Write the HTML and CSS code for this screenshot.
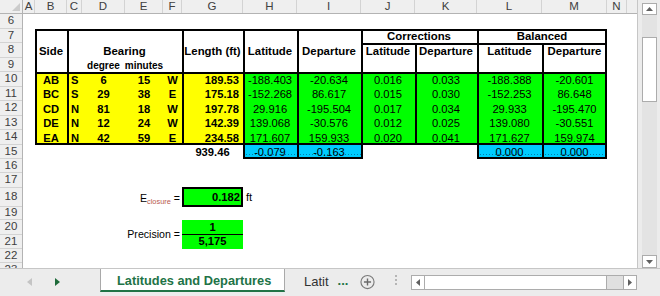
FILE: index.html
```html
<!DOCTYPE html>
<html>
<head>
<meta charset="utf-8">
<link rel="stylesheet" href="styles.css">
</head>
<body>
<div class="app">
  <div class="main">
    <div class="sheet">
      <div class="corner"><span class="corner-tri"></span></div>
      <div class="colheads">
        <div class="ch wA">A</div><div class="ch wB">B</div><div class="ch wC">C</div><div class="ch wD">D</div><div class="ch wE">E</div><div class="ch wF">F</div><div class="ch wG">G</div><div class="ch wH">H</div><div class="ch wI">I</div><div class="ch wJ">J</div><div class="ch wK">K</div><div class="ch wL">L</div><div class="ch wM">M</div><div class="ch wN">N</div><div class="ch wO"></div>
      </div>
      <div class="rowheads">
        <div class="rh h15">6</div><div class="rh h14">7</div><div class="rh h15">8</div><div class="rh h14">9</div><div class="rh h15">10</div><div class="rh h14">11</div><div class="rh h15">12</div><div class="rh h14">13</div><div class="rh h15">14</div><div class="rh h14">15</div><div class="rh h14">16</div><div class="rh h15">17</div><div class="rh h19">18</div><div class="rh h13">19</div><div class="rh h15">20</div><div class="rh h14">21</div><div class="rh h14">22</div><div class="rh h14">23</div>
      </div>
      <div class="cells">
        <div class="hd side">Side</div>
        <div class="hd bearing">Bearing</div>
        <div class="sm deg">degree</div>
        <div class="sm min">minutes</div>
        <div class="hd len">Length (ft)</div>
        <div class="hd lat1">Latitude</div>
        <div class="hd dep1">Departure</div>
        <div class="hd corr">Corrections</div>
        <div class="hd top lat2">Latitude</div>
        <div class="hd top dep2">Departure</div>
        <div class="hd bal">Balanced</div>
        <div class="hd top lat3">Latitude</div>
        <div class="hd top dep3">Departure</div>

        <div class="data">
          <div class="y">AB</div><div class="y l">S</div><div class="y">6</div><div class="y">15</div><div class="y">W</div><div class="y r">189.53</div><div class="g">-188.403</div><div class="g">-20.634</div><div class="g">0.016</div><div class="g">0.033</div><div class="g">-188.388</div><div class="g">-20.601</div>
          <div class="y">BC</div><div class="y l">S</div><div class="y">29</div><div class="y">38</div><div class="y">E</div><div class="y r">175.18</div><div class="g">-152.268</div><div class="g">86.617</div><div class="g">0.015</div><div class="g">0.030</div><div class="g">-152.253</div><div class="g">86.648</div>
          <div class="y">CD</div><div class="y l">N</div><div class="y">81</div><div class="y">18</div><div class="y">W</div><div class="y r">197.78</div><div class="g">29.916</div><div class="g">-195.504</div><div class="g">0.017</div><div class="g">0.034</div><div class="g">29.933</div><div class="g">-195.470</div>
          <div class="y">DE</div><div class="y l">N</div><div class="y">12</div><div class="y">24</div><div class="y">W</div><div class="y r">142.39</div><div class="g">139.068</div><div class="g">-30.576</div><div class="g">0.012</div><div class="g">0.025</div><div class="g">139.080</div><div class="g">-30.551</div>
          <div class="y">EA</div><div class="y l">N</div><div class="y">42</div><div class="y">59</div><div class="y">E</div><div class="y r">234.58</div><div class="g">171.607</div><div class="g">159.933</div><div class="g">0.020</div><div class="g">0.041</div><div class="g">171.627</div><div class="g">159.974</div>
        </div>

        <div class="tot">939.46</div>
        <div class="blue s-h">-0.079</div>
        <div class="blue s-i">-0.163</div>
        <div class="blue s-l">0.000</div>
        <div class="blue s-m">0.000</div>

        <div class="lbl e-lbl">E<span class="sub">closure</span>&nbsp;=</div>
        <div class="e-val">0.182</div>
        <div class="ft">ft</div>

        <div class="lbl p-lbl">Precision =</div>
        <div class="p-num">1</div>
        <div class="p-den">5,175</div>

        <div class="fr f-outer"></div>
        <div class="fr f-h72"></div>
        <div class="fr f-h43"></div>
        <div class="fr f-vC"></div>
        <div class="fr f-vG"></div>
        <div class="fr f-vH"></div>
        <div class="fr f-vI"></div>
        <div class="fr f-vJ"></div>
        <div class="fr f-vK"></div>
        <div class="fr f-vL"></div>
        <div class="fr f-vM"></div>
        <div class="fr f-s1"></div>
        <div class="fr f-s2"></div>
        <div class="fr f-e"></div>
      </div>
    </div>
    <div class="vscroll">
      <div class="sbtn vbtn"><svg width="7" height="4" viewBox="0 0 7 4"><path d="M0 4 L3.5 0 L7 4 Z" fill="#606060"/></svg></div>
      <div class="vtrack"><div class="vthumb"></div></div>
      <div class="sbtn vbtn vdown"><svg width="7" height="4" viewBox="0 0 7 4"><path d="M0 0 L3.5 4 L7 0 Z" fill="#606060"/></svg></div>
    </div>
  </div>
  <div class="tabbar">
    <div class="nav">
      <svg class="nav-prev" width="5" height="8" viewBox="0 0 5 8"><path d="M5 0 L0 4 L5 8 Z" fill="#c4c4c4"/></svg>
      <svg class="nav-next" width="5" height="8" viewBox="0 0 5 8"><path d="M0 0 L5 4 L0 8 Z" fill="#1e6b3a"/></svg>
    </div>
    <div class="tab active">Latitudes and Departures</div>
    <div class="tab tab2">Latit</div>
    <div class="more">...</div>
    <div class="add"><svg width="16" height="16" viewBox="0 0 16 16"><circle cx="8" cy="8" r="7" fill="none" stroke="#7a7a7a" stroke-width="1.2"/><path d="M8 4.2 V11.8 M4.2 8 H11.8" stroke="#6a6a6a" stroke-width="1.5"/></svg></div>
    <div class="vsep"></div>
    <div class="hscroll">
      <div class="sbtn hbtn"><svg width="4" height="7" viewBox="0 0 4 7"><path d="M4 0 L0 3.5 L4 7 Z" fill="#606060"/></svg></div>
      <div class="hthumb"></div>
      <div class="htrack"></div>
      <div class="sbtn hbtn"><svg width="4" height="7" viewBox="0 0 4 7"><path d="M0 0 L4 3.5 L0 7 Z" fill="#606060"/></svg></div>
    </div>
  </div>
</div>
</body>
</html>
```

FILE: styles.css
```css
:root {
  --A: 12px; --B: 32px; --C: 15px; --D: 43px; --E: 38px; --F: 19px; --G: 61px;
  --H: 54px; --I: 64px; --J: 54px; --K: 62px; --L: 65px; --M: 65px; --N: 20px; --O: 10px;
  --hdr-bg: #efefef;
  --hdr-line: #d3d3d3;
  --hdr-edge: #b3b3b3;
}

html, body {
  margin: 0;
  padding: 0;
}

body {
  width: 660px;
  height: 296px;
  overflow: hidden;
}

.app {
  width: 660px;
  height: 296px;
  display: flex;
  flex-direction: column;
  background: #ececec;
  font-family: "Liberation Sans", Arial, sans-serif;
}

.main {
  display: flex;
  height: 268px;
}

.sheet {
  width: 638px;
  height: 268px;
  box-sizing: border-box;
  border-right: 1px solid #c6c6c6;
  background: #fff;
  display: grid;
  grid-template-columns: 23px 1fr;
  grid-template-rows: 14px 1fr;
  overflow: hidden;
}

.corner {
  background: var(--hdr-bg);
  border-right: 1px solid var(--hdr-edge);
  border-bottom: 1px solid var(--hdr-edge);
  box-sizing: border-box;
  display: flex;
  justify-content: flex-end;
  align-items: flex-end;
  padding: 0 2px 2px 0;
}

.corner-tri {
  width: 8px;
  height: 8px;
  background: #cbcbcb;
  clip-path: polygon(100% 0, 100% 100%, 0 100%);
}

.colheads {
  display: flex;
  background: var(--hdr-bg);
  border-bottom: 1px solid var(--hdr-edge);
  box-sizing: border-box;
}

.ch {
  flex: none;
  box-sizing: border-box;
  border-right: 1px solid var(--hdr-line);
  display: flex;
  align-items: center;
  justify-content: center;
  font-size: 11.5px;
  color: #404040;
  line-height: 1;
}

.wA { width: var(--A); } .wB { width: var(--B); } .wC { width: var(--C); }
.wD { width: var(--D); } .wE { width: var(--E); } .wF { width: var(--F); }
.wG { width: var(--G); } .wH { width: var(--H); } .wI { width: var(--I); }
.wJ { width: var(--J); } .wK { width: var(--K); } .wL { width: var(--L); }
.wM { width: var(--M); } .wN { width: var(--N); } .wO { width: var(--O); border-right: 0; }

.rowheads {
  display: flex;
  flex-direction: column;
  background: var(--hdr-bg);
  border-right: 1px solid var(--hdr-edge);
  box-sizing: border-box;
  overflow: hidden;
}

.rh {
  flex: none;
  box-sizing: border-box;
  border-bottom: 1px solid var(--hdr-line);
  display: flex;
  align-items: center;
  justify-content: center;
  font-size: 11.5px;
  color: #404040;
  line-height: 1;
}

.h13 { height: 13px; } .h14 { height: 14px; } .h15 { height: 15px; } .h19 { height: 19px; }

.cells {
  display: grid;
  grid-template-columns: var(--A) var(--B) var(--C) var(--D) var(--E) var(--F) var(--G) var(--H) var(--I) var(--J) var(--K) var(--L) var(--M) var(--N) var(--O);
  grid-template-rows: 15px 14px 15px 14px 15px 14px 15px 14px 15px 14px 14px 15px 19px 13px 15px 14px 14px 5px;
  font-size: 11.2px;
  color: #000;
  line-height: 1;
}

.cells > div {
  display: flex;
  align-items: center;
  justify-content: center;
  white-space: nowrap;
  min-width: 0;
}

.hd { font-weight: bold; font-size: 11.4px; padding-top: 3px; }
.hd.top { align-items: flex-start; padding-top: 3px; }
.sm { font-weight: bold; font-size: 10px; padding-top: 1px; }

.side { grid-area: 2 / 2 / 5 / 3; }
.bearing { grid-area: 3 / 3 / 4 / 7; }
.deg { grid-area: 4 / 4 / 5 / 5; }
.min { grid-area: 4 / 5 / 5 / 6; }
.len { grid-area: 2 / 7 / 5 / 8; }
.lat1 { grid-area: 2 / 8 / 5 / 9; }
.dep1 { grid-area: 2 / 9 / 5 / 10; }
.corr { grid-area: 2 / 10 / 3 / 12; padding-top: 1px; }
.lat2 { grid-area: 3 / 10 / 5 / 11; }
.dep2 { grid-area: 3 / 11 / 5 / 12; }
.bal { grid-area: 2 / 12 / 3 / 14; padding-top: 1px; }
.lat3 { grid-area: 3 / 12 / 5 / 13; }
.dep3 { grid-area: 3 / 13 / 5 / 14; }

.cells > .data {
  grid-area: 5 / 2 / 10 / 14;
  display: grid;
  grid-template-columns: var(--B) var(--C) var(--D) var(--E) var(--F) var(--G) var(--H) var(--I) var(--J) var(--K) var(--L) var(--M);
  grid-template-rows: 15px 14px 15px 14px 15px;
  align-items: stretch;
}

.data > div {
  display: flex;
  align-items: center;
  justify-content: center;
  padding-top: 2px;
  box-sizing: border-box;
}

.y { background: #ffff00; font-weight: bold; }
.g { background: #00ff00; }
.data > .l { justify-content: flex-start; padding-left: 4px; }
.data > .r { justify-content: flex-end; padding-right: 4px; }

.tot { grid-area: 10 / 7 / 11 / 8; font-weight: bold; padding-top: 1px; }

.cells > .blue {
  background-color: #00ccff;
  background-image: linear-gradient(to right, rgba(0, 70, 110, 0.55) 1px, transparent 1px);
  background-size: 3px 1px;
  background-repeat: repeat-x;
  background-position: 0 9px;
  padding-top: 1px;
}

.s-h { grid-area: 10 / 8 / 11 / 9; }
.s-i { grid-area: 10 / 9 / 11 / 10; }
.s-l { grid-area: 10 / 12 / 11 / 13; }
.s-m { grid-area: 10 / 13 / 11 / 14; }

.cells > .lbl {
  justify-content: flex-end;
  padding-right: 2px;
  font-size: 10.6px;
}

.e-lbl { grid-area: 13 / 2 / 14 / 7; padding-top: 1px; }
.sub {
  font-size: 7.4px;
  color: #b85a4e;
  align-self: flex-end;
  margin-bottom: 2px;
}

.cells > .e-val {
  grid-area: 13 / 7 / 14 / 8;
  background: #00ff00;
  font-weight: bold;
  justify-content: flex-end;
  padding: 1px 3px 0 0;
  margin-top: -1px;
}

.cells > .ft {
  grid-area: 13 / 8 / 14 / 9;
  justify-content: flex-start;
  padding-left: 3px;
  font-size: 11.2px;
}

.p-lbl { grid-area: 15 / 2 / 17 / 7; }

.cells > .p-num {
  grid-area: 15 / 7 / 16 / 8;
  background: #00ff00;
  font-weight: bold;
  border-bottom: 1px solid #000;
  box-sizing: border-box;
  padding-top: 1px;
}

.cells > .p-den {
  grid-area: 16 / 7 / 17 / 8;
  background: #00ff00;
  font-weight: bold;
}

.cells > .fr {
  box-sizing: border-box;
  border: 0 solid #000;
  pointer-events: none;
}

.f-outer { grid-area: 2 / 2 / 10 / 14; border-width: 2px !important; }
.f-h72 { grid-area: 5 / 2 / 10 / 14; border-top-width: 2px !important; }
.f-h43 { grid-area: 3 / 10 / 10 / 14; border-top-width: 2px !important; }
.f-vC { grid-area: 2 / 3 / 10 / 4; border-left-width: 2px !important; }
.f-vG { grid-area: 2 / 7 / 10 / 8; border-left-width: 2px !important; }
.f-vH { grid-area: 2 / 8 / 11 / 9; border-left-width: 2px !important; }
.f-vI { grid-area: 2 / 9 / 11 / 10; border-left-width: 2px !important; }
.f-vJ { grid-area: 2 / 10 / 11 / 11; border-left-width: 2px !important; }
.f-vK { grid-area: 3 / 11 / 10 / 12; border-left-width: 2px !important; }
.f-vL { grid-area: 2 / 12 / 11 / 13; border-left-width: 2px !important; }
.f-vM { grid-area: 3 / 13 / 11 / 14; border-left-width: 2px !important; }
.f-s1 { grid-area: 10 / 8 / 11 / 10; border-bottom-width: 2px !important; }
.f-s2 { grid-area: 10 / 12 / 11 / 14; border-bottom-width: 2px !important; border-right-width: 2px !important; }
.f-e { grid-area: 13 / 7 / 14 / 8; border-width: 2px !important; margin-top: -1px; }

/* vertical scrollbar */
.vscroll {
  margin-left: 4px;
  width: 15px;
  padding-top: 3px;
  display: flex;
  flex-direction: column;
}

.sbtn {
  background: #fff;
  border: 1px solid #acacac;
  box-sizing: border-box;
  display: flex;
  align-items: center;
  justify-content: center;
  flex: none;
}

.vbtn { height: 12px; }
.vdown { height: 13px; }

.vtrack {
  flex: 1;
  background: #e3e3e3;
  padding-top: 22px;
}

.vthumb {
  height: 65px;
  background: #fff;
  border: 1px solid #acacac;
  box-sizing: border-box;
}

/* tab bar */
.tabbar {
  height: 28px;
  border-top: 1px solid #c6c6c6;
  box-sizing: border-box;
  display: flex;
  align-items: flex-start;
}

.nav {
  width: 100px;
  height: 23px;
  display: flex;
  align-items: center;
  padding: 2px 0 0 27px;
  box-sizing: border-box;
  gap: 23px;
}

.tab {
  height: 23px;
  box-sizing: border-box;
  display: flex;
  align-items: center;
  padding-top: 2px;
  font-size: 13px;
  white-space: nowrap;
}

.tab.active {
  width: 185px;
  background: #fff;
  border-left: 1px solid #a9a9a9;
  border-right: 1px solid #a9a9a9;
  border-bottom: 2px solid #217346;
  color: #217346;
  font-weight: bold;
  font-size: 12.8px;
  padding-left: 16px;
}

.tab2 {
  width: 48px;
  padding-left: 19px;
  color: #333;
}

.more {
  width: 20px;
  height: 23px;
  display: flex;
  align-items: center;
  justify-content: center;
  box-sizing: border-box;
  color: #217346;
  font-weight: bold;
  font-size: 13px;
}

.add {
  width: 22px;
  height: 23px;
  display: flex;
  align-items: center;
  padding: 3px 0 0 7px;
  box-sizing: border-box;
}

.vsep {
  width: 2px;
  height: 12px;
  margin: 6px 0 0 20px;
  background-image: linear-gradient(to bottom, #b5b5b5 2px, transparent 2px);
  background-size: 2px 4px;
}

.hscroll {
  margin: 6px 0 0 14px;
  width: 226px;
  height: 15px;
  display: flex;
}

.hbtn { width: 14px; height: 15px; }

.hthumb {
  width: 182px;
  background: #fff;
  border-top: 1px solid #acacac;
  border-bottom: 1px solid #acacac;
  border-right: 1px solid #acacac;
  box-sizing: border-box;
}

.htrack {
  flex: 1;
  background: #e0e0e0;
  border-top: 1px solid #acacac;
  border-bottom: 1px solid #acacac;
  box-sizing: border-box;
}
```
